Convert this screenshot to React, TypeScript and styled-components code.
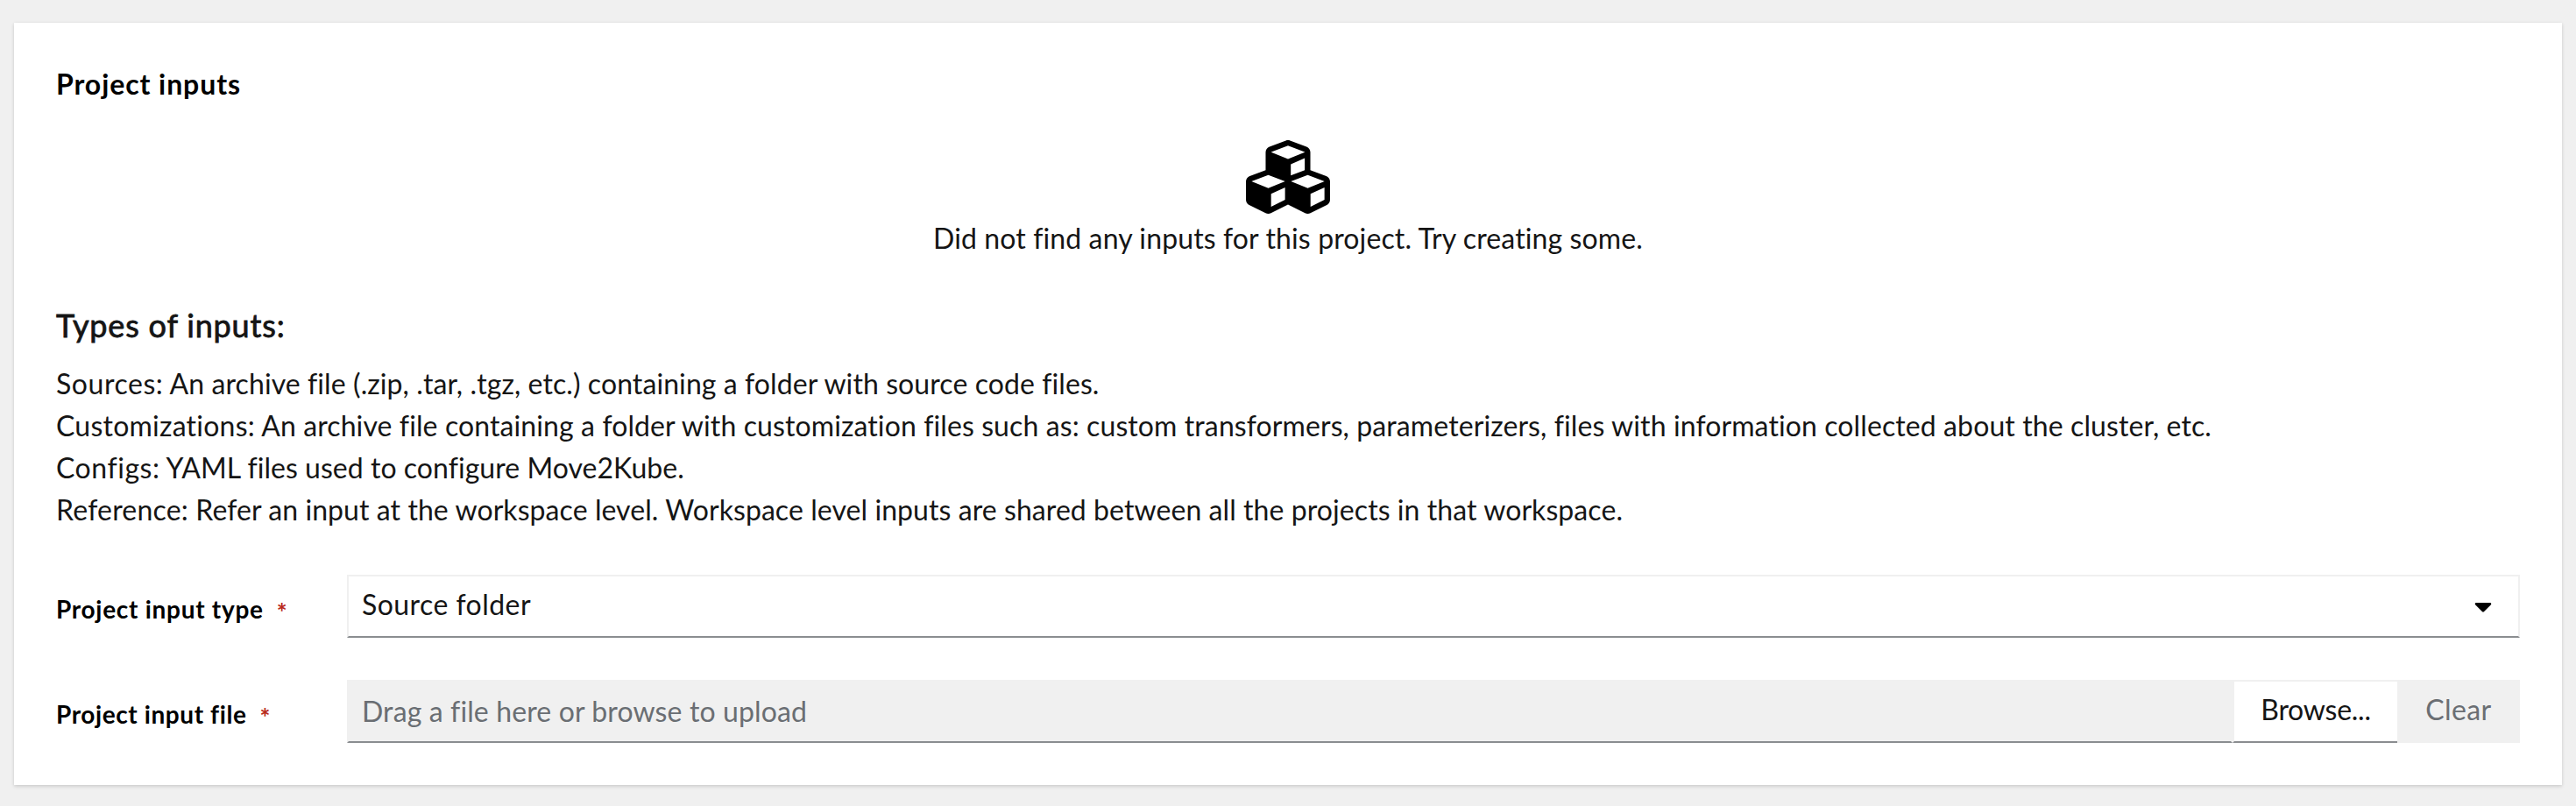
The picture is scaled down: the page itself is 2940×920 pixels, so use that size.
import React from 'react';
import styled, { createGlobalStyle } from 'styled-components';
import { FaCubes, FaCaretDown } from 'react-icons/fa';

const GlobalStyle = createGlobalStyle`
  *, *::before, *::after { box-sizing: border-box; }
  body {
    margin: 0;
    background: #f0f0f0;
    color: #151515;
    font: 400 32px/48px Lato, sans-serif;
    font-variant-ligatures: none;
    letter-spacing: 0.12px;
  }
  h2, h3, p, ul { margin: 0; padding: 0; }
`;

const Page = styled.main`
  height: 920px;
  padding: 26px 16px 24px;
`;

const Card = styled.section`
  height: 870px;
  padding: 49px 48px 48px;
  background: #fff;
  box-shadow: 0 2px 4px rgba(3, 3, 3, 0.12), 0 0 4px rgba(3, 3, 3, 0.06);
`;

const Title = styled.h2`
  font-size: 32px;
  line-height: 42px;
  font-weight: 700;
  letter-spacing: 0.92px;
  color: #000;
`;

const EmptyState = styled.div`
  display: flex;
  flex-direction: column;
  align-items: center;
  margin-top: 37px;

  svg {
    display: block;
    width: 96px;
    height: 96px;
    margin-bottom: -2px;
    color: #000;
  }
`;

const Heading = styled.h3`
  margin: 48px 0 16px;
  font-size: 36px;
  line-height: 54px;
  font-weight: 400;
  letter-spacing: 0.82px;
  -webkit-text-stroke: 0.8px #151515;
`;

const TypeList = styled.ul`
  list-style: none;
`;

const TypeItem = styled.li<{ $track: number }>`
  letter-spacing: ${p => p.$track}px;
  white-space: nowrap;
`;

const Term = styled.span<{ $track: number }>`
  letter-spacing: ${p => p.$track}px;
`;

const Form = styled.form`
  display: grid;
  grid-template-columns: 332px 1fr;
  row-gap: 48px;
  margin-top: 50px;
`;

const Label = styled.label<{ $track: number }>`
  padding-top: 18px;
  font-size: 28px;
  line-height: 42px;
  font-weight: 700;
  letter-spacing: ${p => p.$track}px;
  color: #000;
`;

const Required = styled.span`
  margin-left: 15px;
  line-height: 1;
  vertical-align: -3px;
  color: #ba2b1c;
`;

const Select = styled.div`
  display: flex;
  align-items: center;
  justify-content: space-between;
  height: 72px;
  padding: 0 30px 4px 15px;
  border: 2px solid #f0f0f0;
  border-bottom-color: #8a8d90;
  letter-spacing: 0.45px;

  svg {
    width: 20px;
    height: 32px;
    margin-top: 4px;
    color: #000;
  }
`;

const Upload = styled.div`
  display: flex;
  height: 72px;
`;

const FileName = styled.div`
  flex: 1;
  padding: 10px 15px;
  border: 2px solid #f0f0f0;
  border-bottom-color: #8a8d90;
  background: #f0f0f0;
  color: #6a6e73;
`;

const BrowseButton = styled.button`
  width: 188px;
  padding: 0 0 4px;
  border: solid #f0f0f0;
  border-width: 2px 0 2px 2px;
  border-bottom-color: #8a8d90;
  background: #fff;
  color: #151515;
  font: inherit;
  letter-spacing: -0.25px;
`;

const ClearButton = styled.button`
  width: 140px;
  padding: 0 0 4px;
  border: 0;
  background: #f0f0f0;
  color: #6a6e73;
  font: inherit;
  letter-spacing: 0.4px;
`;

const inputTypes = [
  {
    term: 'Sources:',
    termTrack: 0.55,
    text: 'An archive file (.zip, .tar, .tgz, etc.) containing a folder with source code files.',
    track: 0.085,
  },
  {
    term: 'Customizations:',
    termTrack: 0.23,
    text: 'An archive file containing a folder with customization files such as: custom transformers, parameterizers, files with information collected about the cluster, etc.',
    track: 0.103,
  },
  {
    term: 'Configs:',
    termTrack: 0.54,
    text: 'YAML files used to configure Move2Kube.',
    track: 0.039,
  },
  {
    term: 'Reference:',
    termTrack: 0.21,
    text: 'Refer an input at the workspace level. Workspace level inputs are shared between all the projects in that workspace.',
    track: 0.071,
  },
];

export default function App() {
  return (
    <Page>
      <GlobalStyle />
      <Card>
        <Title>Project inputs</Title>
        <EmptyState>
          <FaCubes />
          <p>Did not find any inputs for this project. Try creating some.</p>
        </EmptyState>
        <Heading>Types of inputs:</Heading>
        <TypeList>
          {inputTypes.map(type => (
            <TypeItem key={type.term} $track={type.track}>
              <Term $track={type.termTrack}>{type.term}</Term> {type.text}
            </TypeItem>
          ))}
        </TypeList>
        <Form>
          <Label $track={0.71}>
            Project input type<Required>*</Required>
          </Label>
          <Select>
            Source folder
            <FaCaretDown />
          </Select>
          <Label $track={0.59}>
            Project input file<Required>*</Required>
          </Label>
          <Upload>
            <FileName>Drag a file here or browse to upload</FileName>
            <BrowseButton type="button">Browse...</BrowseButton>
            <ClearButton type="button">Clear</ClearButton>
          </Upload>
        </Form>
      </Card>
    </Page>
  );
}
